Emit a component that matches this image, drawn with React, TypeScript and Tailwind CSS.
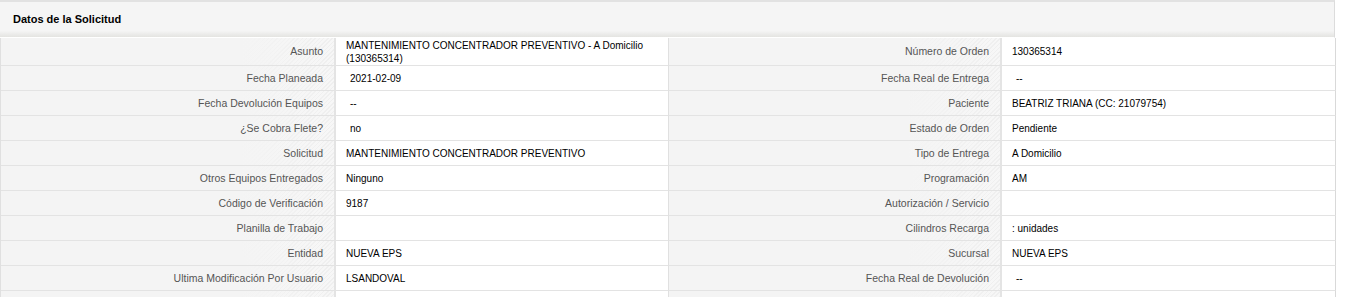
import React from "react";

type Cell = { label: string; value: string; pad?: boolean };

const rows: [Cell, Cell][] = [
  [
    { label: "Asunto", value: "MANTENIMIENTO CONCENTRADOR PREVENTIVO - A Domicilio (130365314)" },
    { label: "Número de Orden", value: "130365314" },
  ],
  [
    { label: "Fecha Planeada", value: "2021-02-09", pad: true },
    { label: "Fecha Real de Entrega", value: "--", pad: true },
  ],
  [
    { label: "Fecha Devolución Equipos", value: "--", pad: true },
    { label: "Paciente", value: "BEATRIZ TRIANA (CC: 21079754)" },
  ],
  [
    { label: "¿Se Cobra Flete?", value: "no", pad: true },
    { label: "Estado de Orden", value: "Pendiente" },
  ],
  [
    { label: "Solicitud", value: "MANTENIMIENTO CONCENTRADOR PREVENTIVO" },
    { label: "Tipo de Entrega", value: "A Domicilio" },
  ],
  [
    { label: "Otros Equipos Entregados", value: "Ninguno" },
    { label: "Programación", value: "AM" },
  ],
  [
    { label: "Código de Verificación", value: "9187" },
    { label: "Autorización / Servicio", value: "" },
  ],
  [
    { label: "Planilla de Trabajo", value: "" },
    { label: "Cilindros Recarga", value: ": unidades" },
  ],
  [
    { label: "Entidad", value: "NUEVA EPS" },
    { label: "Sucursal", value: "NUEVA EPS" },
  ],
  [
    { label: "Ultima Modificación Por Usuario", value: "LSANDOVAL" },
    { label: "Fecha Real de Devolución", value: "--", pad: true },
  ],
  [
    { label: "", value: "" },
    { label: "", value: "" },
  ],
];

function Label({ text, first }: { text: string; first: boolean }) {
  return (
    <div
      className={`flex items-center justify-end pr-[11px] text-[10.5px] border-b border-[#e3e3e3] border-r-[2px] border-r-[#e4e4e4] text-[#555555] bg-[#f4f4f4] bg-[linear-gradient(90deg,rgba(244,244,244,1)_72%,rgba(244,244,244,0)_100%),repeating-linear-gradient(135deg,#efefef_0px,#efefef_1px,#f7f7f7_1px,#f7f7f7_3px)] ${
        first ? "h-[28px]" : "h-[25px]"
      }`}
    >
      <span className="leading-[13px]">{text}</span>
    </div>
  );
}

function Value({ text, pad, first, last }: { text: string; pad?: boolean; first: boolean; last: boolean }) {
  return (
    <div
      className={`flex items-center bg-white text-black border-b border-[#e3e3e3] ${
        pad ? "pl-[14px]" : "pl-[10px]"
      } pr-[8px] ${last ? "border-r border-r-[#d9d9d9]" : "border-r border-r-[#e0e0e0]"} ${
        first ? "h-[28px]" : "h-[25px]"
      }`}
    >
      <span className="leading-[13px]">{text}</span>
    </div>
  );
}

export default function App() {
  return (
    <div className="w-[1346px] h-[297px] overflow-hidden bg-white font-['Liberation_Sans',Arial,sans-serif] text-[10px]">
      <div className="w-[1335px]">
        <div className="h-[38px] border-t-[2px] border-t-[#e2e2e2] border-r border-r-[#dcdcdc] border-b border-b-white bg-[linear-gradient(180deg,#f5f5f5_0%,#f5f5f5_82%,#e4e4e1_100%)] flex items-center pl-[13px]">
          <span className="text-[11px] font-bold text-black">Datos de la Solicitud</span>
        </div>
        <div className="grid grid-cols-[335px_333px_333px_334px] border-l border-l-[#e0e0e0]">
          {rows.map((r, i) => (
            <React.Fragment key={i}>
              <Label text={r[0].label} first={i === 0} />
              <Value text={r[0].value} pad={r[0].pad} first={i === 0} last={false} />
              <Label text={r[1].label} first={i === 0} />
              <Value text={r[1].value} pad={r[1].pad} first={i === 0} last={true} />
            </React.Fragment>
          ))}
        </div>
      </div>
    </div>
  );
}
